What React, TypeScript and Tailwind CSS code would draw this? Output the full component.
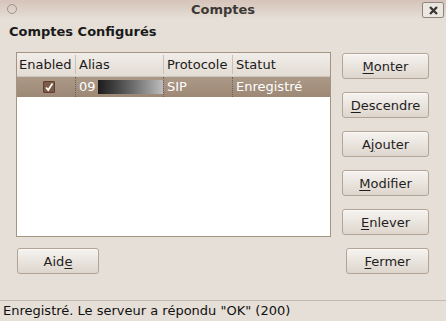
import React from "react";

const font = { fontFamily: '"DejaVu Sans", "Liberation Sans", sans-serif' };

function Btn({
  label,
  u,
  className = "",
}: {
  label: string;
  u: number;
  className?: string;
}) {
  return (
    <button
      className={
        "h-[26px] rounded-[3px] border border-[#b2a597] bg-gradient-to-b from-[#f6f3f0] to-[#ded6cd] text-[13px] text-[#1e1e1e] leading-none shadow-[inset_0_1px_0_#fbfaf8] " +
        className
      }
    >
      {label.slice(0, u)}
      <span className="underline underline-offset-[2px]">{label[u]}</span>
      {label.slice(u + 1)}
    </button>
  );
}

export default function App() {
  return (
    <div
      style={font}
      className="flex h-[321px] w-[446px] flex-col overflow-hidden bg-[#e5dfd7] text-[13px] text-[#1a1a1a]"
    >
      {/* title bar */}
      <div className="relative flex h-[19px] items-center justify-center bg-gradient-to-b from-[#d6c3b9] via-[#ddd1c8] to-[#e5dfd7]">
        <div className="absolute left-[7px] top-[4px] h-[10px] w-[10px] rounded-full border border-[#9d958e]" />
        <span className="text-[13px] font-bold text-[#3c3835]">Comptes</span>
        <div className="absolute right-[2px] top-[2px] flex h-[16px] w-[22px] items-center justify-center rounded-[2px] border border-[#8e8780] bg-[#ebe6e0]">
          <svg width="11" height="9" viewBox="0 0 11 9">
            <path d="M2 1 L9 8 M9 1 L2 8" stroke="#3a3633" strokeWidth="2.3" />
          </svg>
        </div>
      </div>

      <div className="px-[9px] pt-[5px] text-[13px] font-bold leading-[16px]">
        Comptes Configurés
      </div>

      <div className="mt-[12px] flex">
        {/* table */}
        <div className="ml-[16px] h-[185px] w-[315px] border border-[#a49482] bg-white">
          <div className="flex h-[24px] items-center border-b border-[#cfc6bc] bg-gradient-to-b from-[#f1ede9] to-[#e3dcd4]">
            <div className="w-[59px] border-r border-[#c9c0b6] pl-[2px]">Enabled</div>
            <div className="w-[88px] border-r border-[#c9c0b6] pl-[3px]">Alias</div>
            <div className="w-[69px] border-r border-[#c9c0b6] pl-[3px]">Protocole</div>
            <div className="pl-[3px]">Statut</div>
          </div>
          <div className="flex h-[20px] items-center bg-gradient-to-b from-[#ab9987] to-[#9d8875] text-white">
            <div className="flex h-full w-[59px] items-center justify-center border-r border-dotted border-[#6e5f52] pl-[6px]">
              <div className="flex h-[12px] w-[12px] items-center justify-center rounded-[1px] border border-[#5c4032] bg-[#7d5a47]">
                <svg width="10" height="10" viewBox="0 0 10 10">
                  <path d="M2 5.5 L4.2 8 L8.5 1.5" stroke="white" strokeWidth="1.8" fill="none" />
                </svg>
              </div>
            </div>
            <div className="flex h-full w-[88px] items-center border-r border-dotted border-[#6e5f52] pl-[3px]">
              <span>09</span>
              <div className="ml-[2px] h-[14px] w-[65px] bg-gradient-to-r from-[#1c1c1c] to-[#bdbdbd]" />
            </div>
            <div className="flex h-full w-[69px] items-center border-r border-dotted border-[#6e5f52] pl-[3px]">
              SIP
            </div>
            <div className="pl-[3px]">Enregistré</div>
          </div>
        </div>

        {/* side buttons */}
        <div className="ml-[11px] mt-[1px] flex w-[87px] flex-col gap-[13px]">
          <Btn label="Monter" u={0} />
          <Btn label="Descendre" u={0} />
          <Btn label="Ajouter" u={1} />
          <Btn label="Modifier" u={0} />
          <Btn label="Enlever" u={0} />
        </div>
      </div>

      <div className="mt-[11px] flex justify-between pl-[17px] pr-[17px]">
        <Btn label="Aide" u={3} className="w-[82px]" />
        <Btn label="Fermer" u={0} className="w-[83px]" />
      </div>

      <div className="mt-auto border-t border-[#c4b9ad] pl-[3px] pb-[2px] pt-[1px] text-[13px] leading-[17px] text-[#111]">
        Enregistré. Le serveur a répondu "OK" (200)
      </div>
    </div>
  );
}
